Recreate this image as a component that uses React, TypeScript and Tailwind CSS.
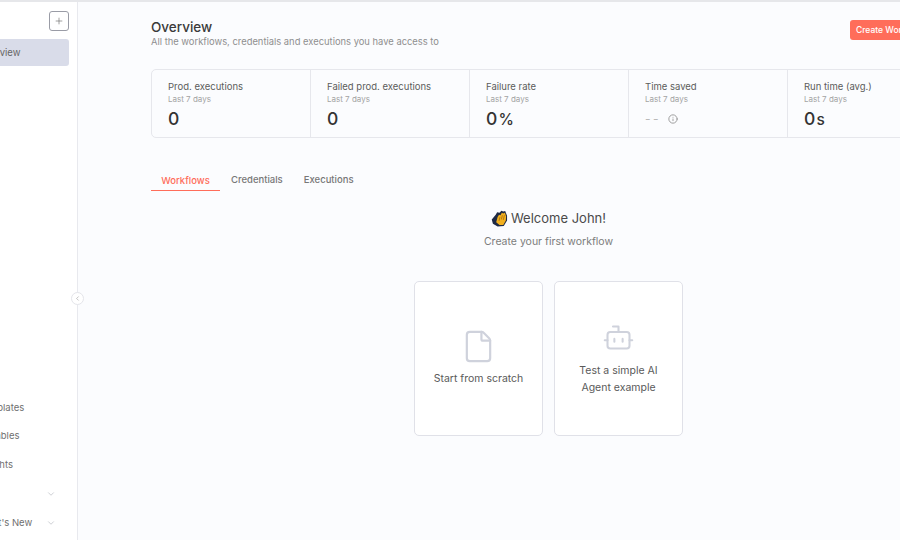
import React from 'react';
import { Bot, ChevronDown, ChevronLeft, File, Info, Plus } from 'lucide-react';

// Stat cells along the top of the overview
const stats = [
  { label: 'Prod. executions', value: '0' },
  { label: 'Failed prod. executions', value: '0' },
  { label: 'Failure rate', value: '0', unit: '%' },
  { label: 'Time saved', value: null },
  { label: 'Run time (avg.)', value: '0', unit: 's' },
];

const bottomNav = [
  { label: 'Templates', chevron: false },
  { label: 'Variables', chevron: false },
  { label: 'Insights', chevron: false },
  { label: 'Help', chevron: true },
  { label: "What's New", chevron: true },
];

const ClapIcon: React.FC = () => (
  <svg width="17" height="17" viewBox="0 0 18 18" className="shrink-0">
    <path d="M0.8 10 L5 5 L6.5 2.5 L9 3 L11 0.8 L13 1.5 L15 1 L17 6 L17 11 L13.5 17 L7 17.5 L2 14.5 Z" fill="#1f2a44" />
    <path d="M5.5 13 L7 7.5 L8.5 5 L10 5.5 L11.5 3 L13 3.8 L14.8 3 L16 7 L15.7 11 L13 16 L9 15.8 Z" fill="#f2b01e" />
    <path d="M9.5 7.5 L8.5 11.5 M12 5.5 L11 10 M14.2 5.5 L13 10.5" stroke="#a8700f" strokeWidth="0.9" fill="none" />
  </svg>
);

const Sidebar: React.FC = () => (
  <aside className="relative w-[78px] shrink-0 bg-white border-r border-[#e8e9ee] flex flex-col">
    <div className="overflow-hidden flex flex-col flex-1">
      <div className="flex justify-end pr-2 pt-[9px]">
        <button className="w-5 h-5 flex items-center justify-center border border-[#9a9ca6] rounded-[3px] text-[#666]">
          <Plus size={10} strokeWidth={1.5} />
        </button>
      </div>
      <div className="mt-[8px] mr-2 h-[27px] rounded-r-[3px] bg-[#d9dce9] flex items-center pt-[1px]">
        <span className="ml-[-22px] text-[9.5px] text-[#666]">Overview</span>
      </div>
      <div className="mt-auto pb-[3px] flex flex-col">
        {bottomNav.map((item) => (
          <div key={item.label} className="h-[28.7px] flex items-center justify-between pr-[21px]">
            <span className="ml-[-22px] text-[9.5px] text-[#707070] whitespace-nowrap">{item.label}</span>
            {item.chevron && <ChevronDown size={10} className="text-[#c4c6cc]" />}
          </div>
        ))}
      </div>
    </div>
    <div className="absolute right-[-7px] top-[290px] w-[13px] h-[13px] rounded-full border border-[#e4e5ea] bg-white flex items-center justify-center text-[#999]">
      <ChevronLeft size={7} />
    </div>
  </aside>
);

const StatCard: React.FC<{ label: string; value: string | null; unit?: string; last: boolean }> = ({ label, value, unit, last }) => (
  <div className={`w-[159px] shrink-0 pl-[16px] pt-[10px] ${last ? '' : 'border-r border-[#e6e7ec]'}`}>
    <div className="text-[9.5px] leading-[13px] text-[#5c5c5c]">{label}</div>
    <div className="text-[8px] leading-[12px] text-[#a3a3a3]">Last 7 days</div>
    {value !== null ? (
      <div className="mt-[1px] text-[#333] text-[17.5px] leading-[26px] font-medium tracking-[0.2px]">
        {value}
        {unit && <span className="ml-[1px] text-[15.5px]">{unit}</span>}
      </div>
    ) : (
      <div className="mt-[1px] h-[26px] flex items-center gap-[7px] text-[#b9b9b9] text-[12px]">
        <span className="tracking-[2.5px]">--</span>
        <Info size={10} className="text-[#8e8e8e]" />
      </div>
    )}
  </div>
);

const ActionCard: React.FC<{ children: React.ReactNode }> = ({ children }) => (
  <div className="w-[129px] h-[155px] rounded-[5px] bg-white border border-[#e0e1e8] flex flex-col items-center justify-center">
    {children}
  </div>
);

export default function App() {
  return (
    <div className="h-screen w-[900px] overflow-hidden flex bg-[#fbfcfe] border-t-2 border-[#e6e7ea] font-['Inter',sans-serif]">
      <Sidebar />
      <main className="flex-1 min-w-0 overflow-hidden pl-[73px] pt-[16px]">
        <div className="flex justify-between">
          <div>
            <h1 className="text-[13.5px] leading-[18px] font-medium text-[#3a3a3a]">Overview</h1>
            <p className="text-[9.4px] leading-[12px] text-[#8f8f8f]">All the workflows, credentials and executions you have access to</p>
          </div>
          <button className="mt-[2px] mr-[-30px] w-[80px] h-[20px] rounded-l-[3px] bg-[#ff6d5a] text-white text-[8.5px] font-medium text-left pl-[6px] whitespace-nowrap overflow-hidden">
            Create Workflow
          </button>
        </div>

        <div className="mt-[21px] w-[900px] h-[69px] flex border border-[#e6e7ec] rounded-l-[5px] bg-[#fbfcfe]">
          {stats.map((s, i) => (
            <StatCard key={s.label} label={s.label} value={s.value} unit={s.unit} last={i === stats.length - 1} />
          ))}
        </div>

        <div className="mt-[33px] flex text-[9.5px] font-medium">
          <div className="w-[69px] h-[20px] border-b border-[#ff6d5a] text-center leading-[19px] text-[#ff6d5a]">Workflows</div>
          <div className="ml-[11px] leading-[17px] text-[#777]">Credentials</div>
          <div className="ml-[21px] leading-[17px] text-[#777]">Executions</div>
        </div>

        <div className="w-[795px] mt-[17px] flex flex-col items-center">
          <div className="flex items-center gap-[3px] text-[13px] leading-[20px] text-[#4a4a4a]">
            <ClapIcon />
            <span>Welcome John!</span>
          </div>
          <p className="mt-[7px] text-[10.5px] leading-[14px] text-[#7c7c7c]">Create your first workflow</p>

          <div className="mt-[32px] flex gap-[11px]">
            <ActionCard>
              <File size={35} strokeWidth={1.5} className="mt-[-1px] text-[#cfd2dc]" />
              <div className="mt-[7px] text-[10.5px] leading-[16px] text-[#5a5a5a]">Start from scratch</div>
            </ActionCard>
            <ActionCard>
              <Bot size={33} strokeWidth={1.5} className="mt-[-1px] text-[#cfd2dc]" />
              <div className="mt-[8px] text-[10.5px] leading-[17px] text-[#5a5a5a] text-center">
                Test a simple AI
                <br />
                Agent example
              </div>
            </ActionCard>
          </div>
        </div>
      </main>
    </div>
  );
}
